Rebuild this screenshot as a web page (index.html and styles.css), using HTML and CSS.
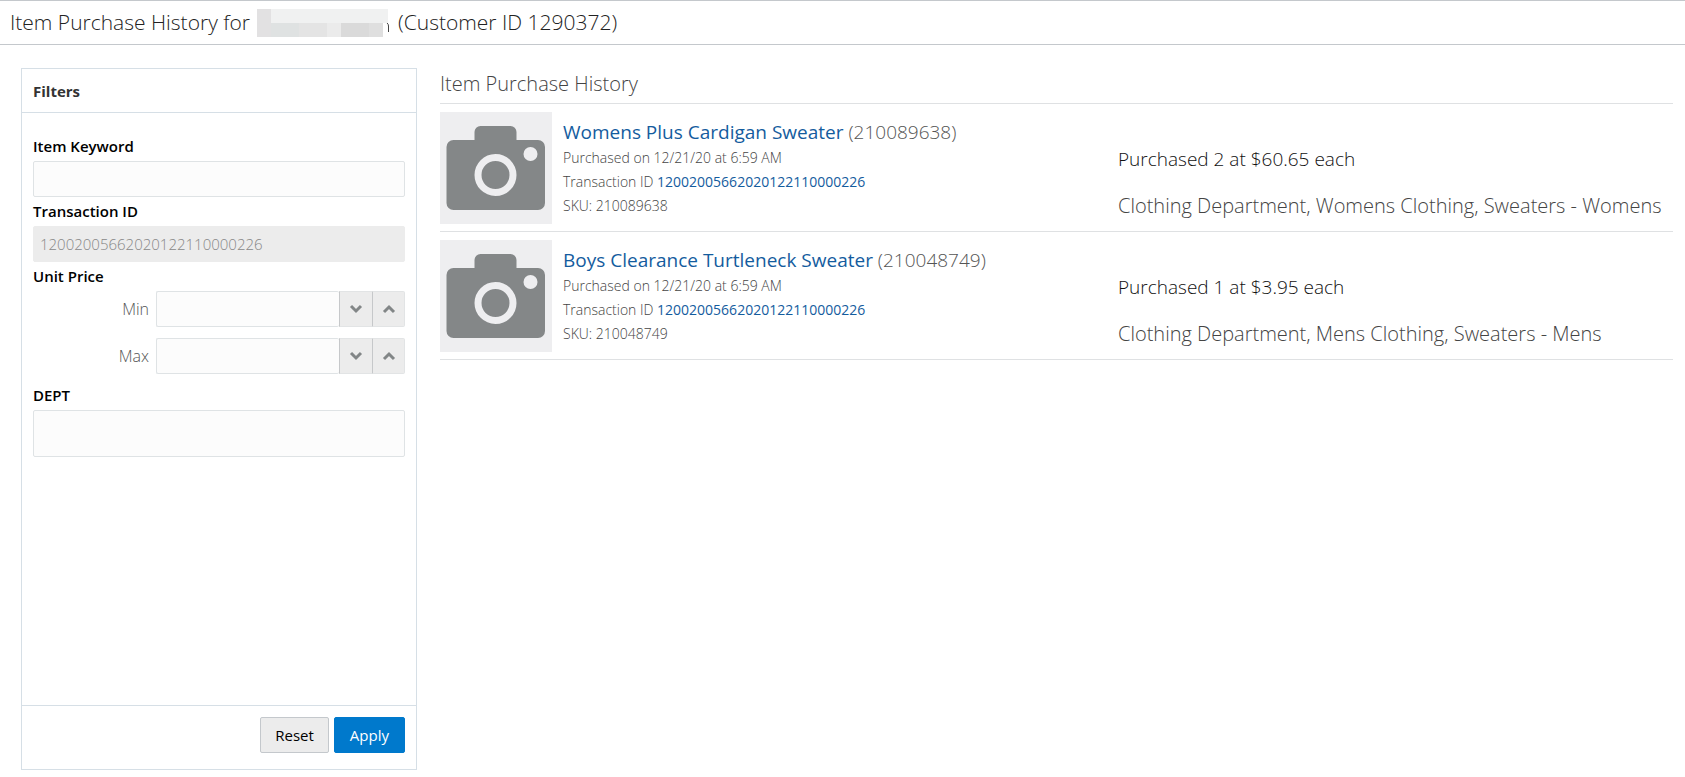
FILE: index.html
```html
<!DOCTYPE html>
<html lang="en">
<head>
<meta charset="utf-8">
<title>Item Purchase History</title>
<link rel="stylesheet" href="styles.css">
</head>
<body>
<svg class="sprite" aria-hidden="true">
  <symbol id="camera" viewBox="0 0 112 112">
    <rect width="112" height="112" fill="#eeeef0"/>
    <path fill="#848788" d="M13.500 28h21V20a6 6 0 0 1 6-6h30a6 6 0 0 1 6 6v8H98a7 7 0 0 1 7 7v56a7 7 0 0 1-7 7H13.500a7 7 0 0 1-7-7V35a7 7 0 0 1 7-7z"/>
    <circle cx="55.500" cy="63" r="17.500" fill="none" stroke="#eeeef0" stroke-width="7"/>
    <circle cx="90.500" cy="42" r="7" fill="#eeeef0"/>
  </symbol>
  <symbol id="down" viewBox="0 0 14 10"><path d="M2 2l5 5 5-5" fill="none" stroke="#828687" stroke-width="3"/></symbol>
  <symbol id="up" viewBox="0 0 14 10"><path d="M2 8l5-5 5 5" fill="none" stroke="#828687" stroke-width="3"/></symbol>
</svg>
<header class="page-header">
  <h1 class="page-title"><span>Item Purchase History for</span>
    <svg class="redacted" viewBox="0 0 134 28" role="img" aria-label="Customer name hidden">
      <rect width="131" height="28" fill="#f0f1f1"/>
      <rect width="14" height="28" fill="#e2e1e2"/>
      <rect x="14" y="14" width="28" height="14" fill="#dfe2e2"/>
      <rect x="42" y="14" width="28" height="14" fill="#e4e4e4"/>
      <rect x="70" y="14" width="14" height="14" fill="#ebebeb"/>
      <rect x="84" y="14" width="28" height="14" fill="#dadada"/>
      <rect x="112" y="14" width="14" height="14" fill="#dfdfdf"/>
      <rect x="126" y="14" width="5" height="14" fill="#fff"/>
      <path d="M130 14q1.500 1 1.500 3v6" fill="none" stroke="#444"/>
    </svg>
    <span>(Customer ID 1290372)</span></h1>
</header>
<main class="content">
  <form class="filters">
    <h2 class="filters-title">Filters</h2>
    <div class="filters-body">
      <label class="label" for="keyword">Item Keyword</label>
      <input class="field" id="keyword" type="text">
      <label class="label" for="transaction">Transaction ID</label>
      <input class="field" id="transaction" type="text" value="12002005662020122110000226" disabled>
      <fieldset class="price">
        <legend class="label">Unit Price</legend>
        <div class="price-row">
          <label class="price-label" for="min">Min</label>
          <div class="spinner">
            <input class="spinner-input" id="min" type="text">
            <button class="spinner-button" type="button" aria-label="Decrease minimum"><svg class="chevron"><use href="#down"/></svg></button>
            <button class="spinner-button" type="button" aria-label="Increase minimum"><svg class="chevron"><use href="#up"/></svg></button>
          </div>
        </div>
        <div class="price-row">
          <label class="price-label" for="max">Max</label>
          <div class="spinner">
            <input class="spinner-input" id="max" type="text">
            <button class="spinner-button" type="button" aria-label="Decrease maximum"><svg class="chevron"><use href="#down"/></svg></button>
            <button class="spinner-button" type="button" aria-label="Increase maximum"><svg class="chevron"><use href="#up"/></svg></button>
          </div>
        </div>
      </fieldset>
      <label class="label" for="dept">DEPT</label>
      <input class="field field-tall" id="dept" type="text">
    </div>
    <div class="filters-footer">
      <button class="button" type="reset">Reset</button>
      <button class="button button-primary" type="submit">Apply</button>
    </div>
  </form>
  <section class="history">
    <h2 class="history-title">Item Purchase History</h2>
    <article class="item">
      <svg class="thumb" role="img" aria-label="No picture"><use href="#camera"/></svg>
      <div class="details">
        <h3 class="item-name"><a class="link" href="#">Womens Plus Cardigan Sweater</a> (210089638)</h3>
        <p class="meta">Purchased on 12/21/20 at 6:59 AM</p>
        <p class="meta">Transaction ID <a class="link" href="#">12002005662020122110000226</a></p>
        <p class="meta">SKU: 210089638</p>
      </div>
      <div class="summary">
        <p class="amount">Purchased 2 at $60.65 each</p>
        <p class="category">Clothing Department, Womens Clothing, Sweaters - Womens</p>
      </div>
    </article>
    <article class="item">
      <svg class="thumb" role="img" aria-label="No picture"><use href="#camera"/></svg>
      <div class="details">
        <h3 class="item-name"><a class="link" href="#">Boys Clearance Turtleneck Sweater</a> (210048749)</h3>
        <p class="meta">Purchased on 12/21/20 at 6:59 AM</p>
        <p class="meta">Transaction ID <a class="link" href="#">12002005662020122110000226</a></p>
        <p class="meta">SKU: 210048749</p>
      </div>
      <div class="summary">
        <p class="amount">Purchased 1 at $3.95 each</p>
        <p class="category">Clothing Department, Mens Clothing, Sweaters - Mens</p>
      </div>
    </article>
  </section>
</main>
</body>
</html>
```
FILE: styles.css
```css
* { box-sizing: border-box; }
body {
  margin: 0;
  min-height: 100vh;
  display: flex;
  flex-direction: column;
  background: #fff;
  color: #333;
  font-family: "Open Sans", "Noto Sans", sans-serif;
  font-size: 15px;
}
h1, h2, h3, p { margin: 0; font-weight: 300; }
input, button { font: inherit; margin: 0; }
.sprite { display: none; }
.page-header {
  padding: 0 10px;
  border-top: 1px solid #c4c8cc;
  border-bottom: 1px solid #c4c8cc;
}
.page-title {
  display: flex;
  align-items: center;
  gap: 7px;
  color: #222;
  font-size: 21px;
  line-height: 43px;
}
.redacted { width: 134px; height: 28px; }
.content {
  flex: 1;
  display: flex;
  gap: 23px;
  padding: 23px 12px 7px 21px;
}
.filters {
  flex: 0 0 396px;
  display: flex;
  flex-direction: column;
  border: 1px solid #d6dfe6;
}
.filters-title {
  padding: 1px 11px 0;
  border-bottom: 1px solid #d6dfe6;
  font-size: 15px;
  font-weight: 700;
  line-height: 42px;
}
.filters-body {
  flex: 1;
  display: flex;
  flex-direction: column;
  padding: 19px 11px;
}
.label {
  display: block;
  padding: 0;
  color: #000;
  font-size: 15px;
  font-weight: 600;
  line-height: 29px;
}
.field, .spinner-input {
  width: 100%;
  height: 36px;
  padding: 0 6px;
  border: 1px solid #dfe3e5;
  border-radius: 2px;
  background: #fcfcfc;
}
.field:disabled {
  border-color: #ececec;
  background: #ececec;
  color: #888;
  font-weight: 300;
}
.field-tall { height: 47px; }
.price { margin: 0 0 7px; padding: 0; border: 0; min-width: 0; }
.price-row { display: flex; align-items: center; }
.price-row + .price-row { margin-top: 11px; }
.price-label { width: 116px; text-align: right; color: #555; font-weight: 300; font-size: 16px; }
.spinner { flex: 1; display: flex; margin-left: 7px; }
.spinner-input { flex: 1; min-width: 0; border-right: 0; }
.spinner-button {
  display: grid;
  place-items: center;
  width: 33px;
  padding: 0;
  border: 1px solid #e2e4e5;
  border-left-color: #c6c8ca;
  background: #ececec;
}
.spinner-button + .spinner-button { border-radius: 0 2px 2px 0; }
.spinner-button:not(:last-child) { border-right: 0; }
.chevron { width: 14px; height: 10px; }
.filters-footer {
  display: flex;
  justify-content: flex-end;
  gap: 5px;
  padding: 11px 11px 16px;
  border-top: 1px solid #d6dfe6;
}
.button {
  height: 36px;
  padding: 0 14px;
  border: 1px solid #c4c8cc;
  border-radius: 2px;
  background: #ececec;
  color: #000;
}
.button-primary { padding: 0 15px; border-color: #0079cc; background: #0079cc; color: #fff; }
.history { flex: 1; min-width: 0; }
.history-title {
  border-bottom: 1px solid #dfe1e3;
  color: #444;
  font-size: 20px;
  line-height: 31px;
  padding-bottom: 4px;
}
.item {
  display: flex;
  padding: 8px 0 7px;
  border-bottom: 1px solid #dfe1e3;
}
.thumb { flex: none; width: 112px; height: 112px; }
.details { flex: 1; min-width: 0; padding: 6px 0 0 11px; }
.item-name { color: #555; font-size: 19px; line-height: 28px; }
.meta { color: #444; font-size: 14px; line-height: 24px; }
.link { color: #145c9e; font-weight: 400; text-decoration: none; }
.summary {
  flex: 0 0 555px;
  display: flex;
  flex-direction: column;
  gap: 23px;
  padding-top: 35px;
  line-height: 24px;
}
.amount { color: #111; font-size: 19px; }
.category { color: #444; font-size: 20px; }
```
